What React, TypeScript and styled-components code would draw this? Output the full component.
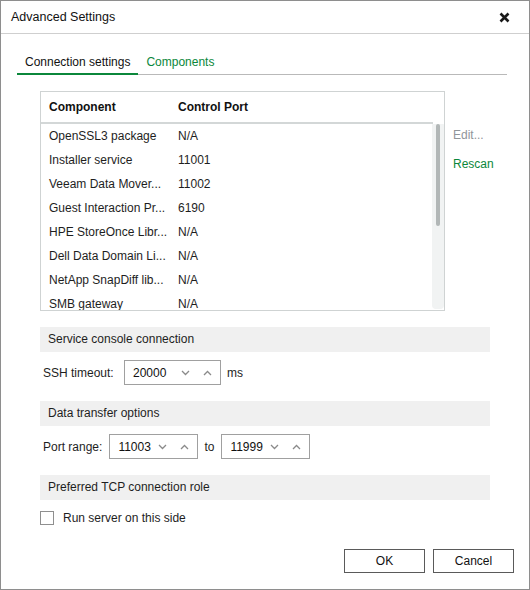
import styled, { createGlobalStyle } from "styled-components";

const GREEN = "#0b873b";

const GlobalStyle = createGlobalStyle`
  html, body {
    margin: 0;
    padding: 0;
    background: #fff;
  }
  body {
    font-family: "Liberation Sans", Arial, sans-serif;
    font-size: 12px;
    color: #1e1e1e;
  }
  * {
    box-sizing: border-box;
  }
`;

const rows: [string, string][] = [
  ["OpenSSL3 package", "N/A"],
  ["Installer service", "11001"],
  ["Veeam Data Mover...", "11002"],
  ["Guest Interaction Pr...", "6190"],
  ["HPE StoreOnce Libr...", "N/A"],
  ["Dell Data Domain Li...", "N/A"],
  ["NetApp SnapDiff lib...", "N/A"],
  ["SMB gateway", "N/A"],
];

function Chevron({ up }: { up?: boolean }) {
  return (
    <svg width="9" height="6" viewBox="0 0 9 6">
      <path
        d={up ? "M1 5 L4.5 1.5 L8 5" : "M1 1 L4.5 4.5 L8 1"}
        fill="none"
        stroke="#8a8a8a"
        strokeWidth="1.3"
      />
    </svg>
  );
}

function Spinner({ value, width }: { value: string; width: number }) {
  return (
    <SpinBox $width={width}>
      <SpinValue>{value}</SpinValue>
      <SpinArrows>
        <Chevron />
        <Chevron up />
      </SpinArrows>
    </SpinBox>
  );
}

export default function App() {
  return (
    <>
      <GlobalStyle />
      <Window>
        <TitleBar>
          <Title>Advanced Settings</Title>
          <CloseIcon width="11" height="11" viewBox="0 0 11 11">
            <path d="M1.5 1.5 L9.5 9.5 M9.5 1.5 L1.5 9.5" stroke="#1a1a1a" strokeWidth="2.6" />
          </CloseIcon>
        </TitleBar>

        <Body>
          <TabBar>
            <Tab $active>Connection settings</Tab>
            <Tab>Components</Tab>
          </TabBar>

          <Content>
            <TableRow>
              <Table>
                <HeadRow>
                  <NameCell>Component</NameCell>
                  <PortCell>Control Port</PortCell>
                </HeadRow>
                <TableBody>
                  {rows.map(([name, port]) => (
                    <Row key={name}>
                      <NameCell>{name}</NameCell>
                      <PortCell>{port}</PortCell>
                    </Row>
                  ))}
                  <ScrollTrack>
                    <ScrollThumb />
                  </ScrollTrack>
                </TableBody>
              </Table>
              <SideActions>
                <SideLink $disabled>Edit...</SideLink>
                <SideLink>Rescan</SideLink>
              </SideActions>
            </TableRow>

            <Section>
              <SectionHeader>Service console connection</SectionHeader>
              <FieldRow>
                <Label $width={74}>SSH timeout:</Label>
                <Spinner value="20000" width={97} />
                <Label>ms</Label>
              </FieldRow>
            </Section>

            <Section>
              <SectionHeader>Data transfer options</SectionHeader>
              <FieldRow>
                <Label>Port range:</Label>
                <Spinner value="11003" width={89} />
                <Label>to</Label>
                <Spinner value="11999" width={89} />
              </FieldRow>
            </Section>

            <Section>
              <SectionHeader>Preferred TCP connection role</SectionHeader>
              <CheckRow>
                <CheckBox />
                <span>Run server on this side</span>
              </CheckRow>
            </Section>
          </Content>

          <Footer>
            <Button>OK</Button>
            <Button>Cancel</Button>
          </Footer>
        </Body>
      </Window>
    </>
  );
}

const Window = styled.div`
  width: 530px;
  height: 590px;
  border: 1px solid #8e8e8e;
  display: flex;
  flex-direction: column;
  background: #fff;
`;

const TitleBar = styled.div`
  height: 33px;
  flex-shrink: 0;
  display: flex;
  align-items: center;
  justify-content: space-between;
  padding: 0 19px 0 10px;
  border-bottom: 1px solid #cfcfcf;
`;

const Title = styled.span`
  font-size: 12.5px;
  color: #111;
`;

const CloseIcon = styled.svg`
  display: block;
`;

const Body = styled.div`
  flex: 1;
  display: flex;
  flex-direction: column;
  padding: 16px 15px 16px 16px;
`;

const TabBar = styled.div`
  display: flex;
  height: 25px;
  margin-right: 7px;
  border-bottom: 1px solid #b9b9b9;
`;

const Tab = styled.div<{ $active?: boolean }>`
  padding: 0 8px;
  height: 25px;
  line-height: 24px;
  font-size: 12px;
  color: ${(p) => (p.$active ? "#111" : GREEN)};
  border-bottom: 2px solid ${(p) => (p.$active ? GREEN : "transparent")};
  margin-bottom: -1px;
`;

const Content = styled.div`
  padding: 16px 0 0 23px;
  display: flex;
  flex-direction: column;
`;

const TableRow = styled.div`
  display: flex;
  align-items: flex-start;
`;

const Table = styled.div`
  width: 405px;
  height: 220px;
  border: 1px solid #cfd3d3;
  overflow: hidden;
  display: flex;
  flex-direction: column;
`;

const HeadRow = styled.div`
  display: flex;
  align-items: center;
  height: 32px;
  font-weight: bold;
  color: #111;
  margin-right: 11px;
  border-bottom: 2px solid #d3d7d7;
  flex-shrink: 0;
`;

const TableBody = styled.div`
  position: relative;
  flex: 1;
  overflow: hidden;
`;

const Row = styled.div`
  display: flex;
  align-items: center;
  height: 24px;
`;

const NameCell = styled.div`
  width: 129px;
  padding-left: 8px;
  white-space: nowrap;
`;

const PortCell = styled.div`
  padding-left: 8px;
`;

const ScrollTrack = styled.div`
  position: absolute;
  right: 0;
  top: -2px;
  bottom: 1px;
  width: 12px;
  background: #f1f3f3;
  border-radius: 4px;
`;

const ScrollThumb = styled.div`
  position: absolute;
  left: 4px;
  top: 2px;
  width: 4px;
  height: 102px;
  background: #b2b7b7;
  border-radius: 2px;
`;

const SideActions = styled.div`
  display: flex;
  flex-direction: column;
  gap: 15px;
  padding: 37px 0 0 8px;
`;

const SideLink = styled.span<{ $disabled?: boolean }>`
  font-size: 12px;
  color: ${(p) => (p.$disabled ? "#90959a" : GREEN)};
`;

const Section = styled.div`
  margin-top: 16px;
  display: flex;
  flex-direction: column;
  gap: 8px;
`;

const SectionHeader = styled.div`
  width: 450px;
  height: 25px;
  line-height: 25px;
  padding-left: 8px;
  background: #f0f0f0;
  color: #1e1e1e;
`;

const FieldRow = styled.div`
  display: flex;
  align-items: center;
  gap: 6px;
  padding-left: 3px;
`;

const Label = styled.span<{ $width?: number }>`
  min-width: ${(p) => (p.$width ? `${p.$width}px` : "auto")};
  margin-right: 1px;
`;

const SpinBox = styled.div<{ $width: number }>`
  width: ${(p) => p.$width}px;
  height: 25px;
  border: 1px solid #a0a0a0;
  display: flex;
  align-items: center;
  justify-content: space-between;
  padding: 0 8px 0 8px;
`;

const SpinValue = styled.span`
  color: #111;
`;

const SpinArrows = styled.div`
  display: flex;
  align-items: center;
  gap: 13px;
  svg {
    display: block;
  }
`;

const CheckRow = styled.div`
  display: flex;
  align-items: center;
  gap: 9px;
  margin-top: 3px;
`;

const CheckBox = styled.span`
  width: 14px;
  height: 14px;
  border: 1px solid #8f8f8f;
  background: #fff;
`;

const Footer = styled.div`
  margin-top: auto;
  display: flex;
  justify-content: flex-end;
  gap: 8px;
`;

const Button = styled.button`
  width: 81px;
  height: 24px;
  border: 1px solid #5a5a5a;
  background: #fff;
  font-family: inherit;
  font-size: 12px;
  color: #111;
  padding: 0;
`;
